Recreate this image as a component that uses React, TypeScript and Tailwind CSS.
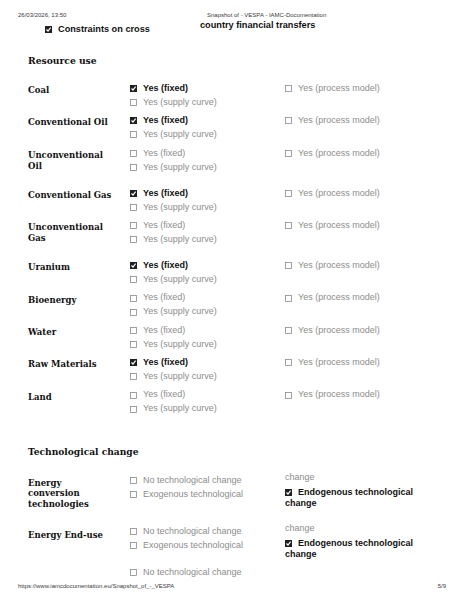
import React from "react";

const sans = { fontFamily: '"Liberation Sans", Arial, sans-serif' };
const serif = { fontFamily: '"DejaVu Serif", serif' };

function Box({ checked }: { checked: boolean }) {
  return checked ? (
    <svg width="7" height="7" viewBox="0 0 7 7" className="shrink-0">
      <rect x="0.5" y="0.5" width="6" height="6" fill="#1f1f1f" stroke="#1f1f1f" strokeWidth="1" />
      <path d="M1.5 3.5 L3 5 L5.6 1.7" stroke="#ffffff" strokeWidth="1.2" fill="none" />
    </svg>
  ) : (
    <svg width="7" height="7" viewBox="0 0 7 7" className="shrink-0">
      <rect x="0.5" y="0.5" width="6" height="6" fill="#ffffff" stroke="#8a8a8a" strokeWidth="0.8" />
    </svg>
  );
}

function Opt({ checked, text }: { checked: boolean; text: string }) {
  return (
    <div className="flex items-center h-[14px]">
      <Box checked={checked} />
      <span
        className={
          checked
            ? "ml-[6px] text-[9px] font-bold text-[#111] whitespace-nowrap"
            : "ml-[6px] text-[9px] text-[#8c8c8c] whitespace-nowrap"
        }
      >
        {text}
      </span>
    </div>
  );
}

type Row = { label: string[]; fixed: boolean; h: string };

const rows: Row[] = [
  { label: ["Coal"], fixed: true, h: "h-[32.4px]" },
  { label: ["Conventional Oil"], fixed: true, h: "h-[32.4px]" },
  { label: ["Unconventional", "Oil"], fixed: false, h: "h-[40px]" },
  { label: ["Conventional Gas"], fixed: true, h: "h-[32.4px]" },
  { label: ["Unconventional", "Gas"], fixed: false, h: "h-[40px]" },
  { label: ["Uranium"], fixed: true, h: "h-[32.4px]" },
  { label: ["Bioenergy"], fixed: false, h: "h-[32.4px]" },
  { label: ["Water"], fixed: false, h: "h-[32.4px]" },
  { label: ["Raw Materials"], fixed: true, h: "h-[32.4px]" },
  { label: ["Land"], fixed: false, h: "h-[32.4px]" },
];

function Label({ lines }: { lines: string[] }) {
  return (
    <div className="w-[102px] shrink-0 pt-[3.5px] text-[8.5px] leading-[11.3px] font-bold text-[#111]" style={serif}>
      {lines.map((l) => (
        <div key={l}>{l}</div>
      ))}
    </div>
  );
}

function TechRight() {
  return (
    <div className="-mt-[1.5px]">
      <div className="text-[9px] leading-[11px] text-[#8c8c8c]">change</div>
      <div className="mt-[4px] text-[9px] leading-[10.5px] font-bold text-[#111] w-[150px]">
        <span className="inline-flex items-center align-middle mr-[6px] -mt-[1px]">
          <Box checked={true} />
        </span>
        Endogenous technological change
      </div>
    </div>
  );
}

export default function App() {
  return (
    <div className="w-[463px] h-[599px] bg-white overflow-hidden text-black" style={sans}>
      {/* print header */}
      <div className="flex pt-[11px] text-[6px] leading-[8px] text-[#3a3a3a]">
        <span className="pl-[18px] w-[207px] shrink-0">26/03/2026, 13:50</span>
        <span>Snapshot of - VESPA - IAMC-Documentation</span>
      </div>

      {/* carry-over row */}
      <div className="flex">
        <div className="pl-[45px] w-[200px] shrink-0 flex items-center h-[12px] mt-[4px]">
          <Box checked={true} />
          <span className="ml-[6px] text-[9.2px] font-bold leading-[12px] text-[#111]">Constraints on cross</span>
        </div>
        <div className="text-[9.2px] font-bold leading-[12px] text-[#111]">country financial transfers</div>
      </div>

      {/* Resource use */}
      <div className="pl-[28px] mt-[19px] text-[9.2px] leading-[14px] font-bold text-[#111]" style={serif}>
        Resource use
      </div>

      <div className="mt-[13.5px] pl-[28px]">
        {rows.map((r) => (
          <div key={r.label.join(" ")} className={"flex " + r.h}>
            <Label lines={r.label} />
            <div className="w-[155px] shrink-0">
              <Opt checked={r.fixed} text="Yes (fixed)" />
              <Opt checked={false} text="Yes (supply curve)" />
            </div>
            <div>
              <Opt checked={false} text="Yes (process model)" />
            </div>
          </div>
        ))}
      </div>

      {/* Technological change */}
      <div className="pl-[28px] mt-[24px] text-[9.1px] leading-[14px] font-bold text-[#111]" style={serif}>
        Technological change
      </div>

      <div className="mt-[15px] pl-[28px]">
        <div className="flex h-[51px]">
          <div className="w-[102px] shrink-0 pt-[4px] text-[8.5px] leading-[10.8px] font-bold text-[#111]" style={serif}>
            <div>Energy</div>
            <div>conversion</div>
            <div>technologies</div>
          </div>
          <div className="w-[155px] shrink-0">
            <Opt checked={false} text="No technological change" />
            <Opt checked={false} text="Exogenous technological" />
          </div>
          <TechRight />
        </div>
        <div className="flex h-[41px]">
          <div className="w-[102px] shrink-0 pt-[5px] text-[8.5px] leading-[10.8px] font-bold text-[#111]" style={serif}>
            <div>Energy End-use</div>
          </div>
          <div className="w-[155px] shrink-0">
            <Opt checked={false} text="No technological change" />
            <Opt checked={false} text="Exogenous technological" />
          </div>
          <TechRight />
        </div>
        <div className="flex">
          <div className="w-[102px] shrink-0" />
          <Opt checked={false} text="No technological change" />
        </div>
      </div>

      {/* print footer */}
      <div className="flex justify-between mt-[2px] pl-[18px] pr-[17px] text-[6px] leading-[8px] text-[#3a3a3a]">
        <span>https://www.iamcdocumentation.eu/Snapshot_of_-_VESPA</span>
        <span>5/9</span>
      </div>
    </div>
  );
}
